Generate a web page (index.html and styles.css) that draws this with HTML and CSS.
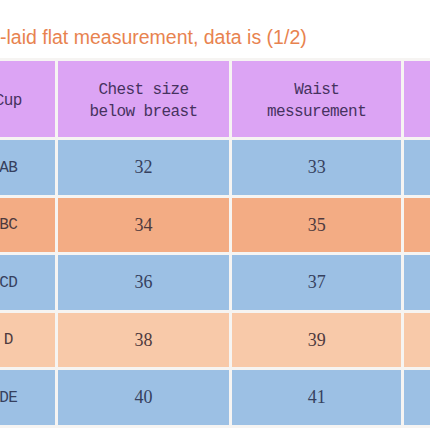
FILE: index.html
```html
<!DOCTYPE html>
<html lang="en">
<head>
    <meta charset="UTF-8">
    <meta name="viewport" content="width=device-width, initial-scale=1.0">
    <title>Size Chart</title>
    <link rel="stylesheet" href="styles.css">
</head>
<body>

    <div class="chart">
        <p class="note">-laid flat measurement, data is (1/2)</p>

        <table class="size-table">
            <tr class="head">
                <td class="cup">Cup</td>
                <td>Chest size<br>below breast</td>
                <td>Waist<br>messurement</td>
                <td></td>
            </tr>
            <tr class="blue">
                <td class="cup">AB</td>
                <td class="num">32</td>
                <td class="num">33</td>
                <td></td>
            </tr>
            <tr class="orange">
                <td class="cup">BC</td>
                <td class="num">34</td>
                <td class="num">35</td>
                <td></td>
            </tr>
            <tr class="blue">
                <td class="cup">CD</td>
                <td class="num">36</td>
                <td class="num">37</td>
                <td></td>
            </tr>
            <tr class="peach">
                <td class="cup">D</td>
                <td class="num">38</td>
                <td class="num">39</td>
                <td></td>
            </tr>
            <tr class="blue">
                <td class="cup">DE</td>
                <td class="num">40</td>
                <td class="num">41</td>
                <td></td>
            </tr>
        </table>
    </div>

</body>
</html>
```

FILE: styles.css
```css
/* General styles */
body {
    margin: 0;
    padding: 0;
    background-color: #fff;
    overflow: hidden;
}

.chart {
    width: 430px;
    height: 430px;
    overflow: hidden;
}

.note {
    margin: 0;
    padding-top: 25px;
    height: 33px;
    font-family: "Liberation Sans", Arial, sans-serif;
    font-size: 19.5px;
    line-height: 24px;
    color: #e8834f;
    white-space: nowrap;
}

/* Table */
.size-table {
    margin-left: -42px;
    border-collapse: separate;
    border-spacing: 3px;
    background-color: #f6f4f2;
    table-layout: fixed;
    width: 620px;
}

.size-table td {
    text-align: center;
    vertical-align: middle;
    padding: 0;
    font-family: "Liberation Mono", "Courier New", monospace;
    font-size: 15px;
    color: #36405e;
}

.size-table td:nth-child(1) { width: 94px; }
.size-table td:nth-child(2) { width: 170px; }
.size-table td:nth-child(3) { width: 169px; }
.size-table td:nth-child(4) { width: 170px; }

.head td {
    height: 72px;
    background-color: #dca4f4;
    color: #46325f;
    font-size: 16px;
    letter-spacing: -0.6px;
    line-height: 22px;
    padding-top: 4px;
}

.blue td { height: 55px; background-color: #9cc0e4; }
.orange td { height: 54px; background-color: #f3ac84; color: #4e3a3e; }
.peach td { height: 54px; background-color: #f8c9a9; color: #4e3a3e; }

.size-table td.num {
    font-family: "Liberation Serif", "Times New Roman", serif;
    font-size: 18px;
}

.size-table td.cup {
    font-size: 16px;
    letter-spacing: -0.6px;
}
```
